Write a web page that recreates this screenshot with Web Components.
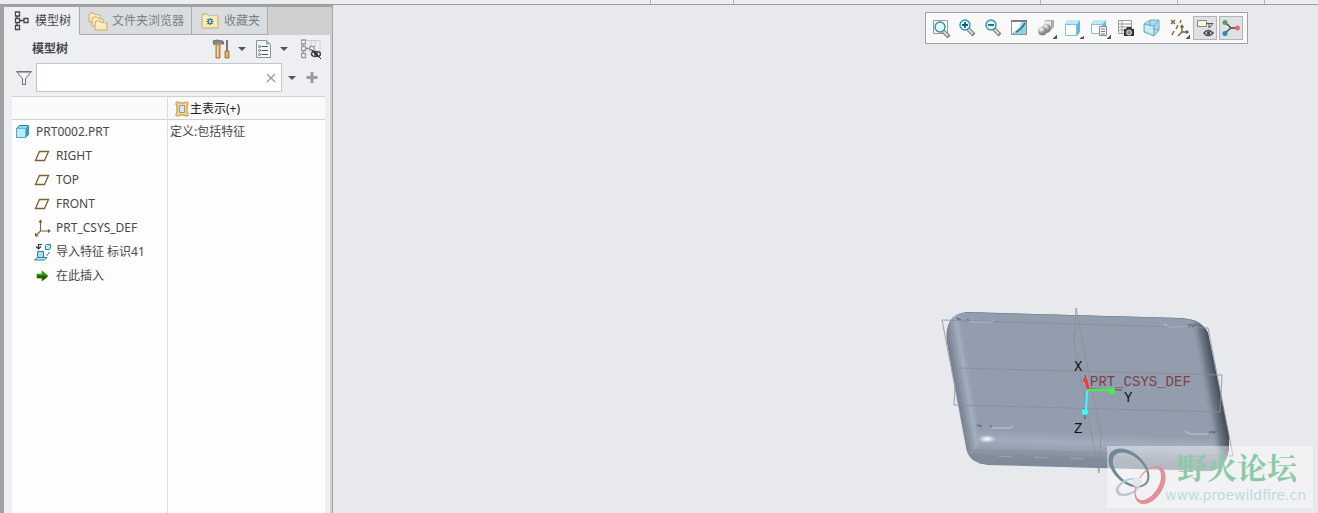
<!DOCTYPE html>
<html lang="zh-CN">
<head>
<meta charset="utf-8">
<title>模型树</title>
<style>
  :root {
    --line: #a2a2a2;
    --panel: #edeff2;
    --text: #484848;
  }
  html, body { height: 100%; }
  body {
    margin: 0;
    overflow: hidden;
    background: #e8e9ed;
    color: var(--text);
    font: 12px/16px "Noto Sans", "Noto Sans CJK SC", sans-serif;
  }
</style>
</head>
<body>
<cad-app>
  <side-panel slot="side">
    <panel-tabs slot="tabs"></panel-tabs>
    <tree-tools></tree-tools>
    <tree-filter></tree-filter>
    <model-tree></model-tree>
  </side-panel>
  <view-toolbar></view-toolbar>
  <part-view></part-view>
</cad-app>

<script>
const cube = (x, y, s, d) => `
  <path d="M${x} ${y + d}l${d}-${d}h${s}v${s}l-${d} ${d}h-${s}z" fill="#8ed6ee" stroke="#2c7da0"/>
  <path d="M${x + s} ${y + d}l${d}-${d}v${s}l-${d} ${d}z" fill="#389fc9"/>
  <path d="M${x} ${y + d}h${s}v${s}h-${s}z" fill="#b8ecfa" stroke="#4a9dbc" stroke-width=".6"/>`;

const lens = (mark) => `
  <path d="M11 11l6 6" stroke="#777" stroke-width="4"/>
  <path d="M11 11l5 5" stroke="#ddd" stroke-width="2"/>
  <circle cx="8" cy="7" r="5" fill="#e7f7fb" stroke="#3290b4" stroke-width="1.4"/>${mark}`;

const folder = (x, y, w, h) => `
  <path d="M${x} ${y + h}v-${h - 2}l1-2h4l2 2h${w - 7}v${h - 2}z" fill="#ffe9b8" stroke="#c49a54" stroke-width=".8"/>
  <path d="M${x + 1} ${y + 3}h${w - 2}" stroke="#fff7df"/>`;

const nodes = (c) => `
  <g fill="#fff" stroke="${c}" stroke-width="1.3"><path d="M5 5v9M5 9.500h6"/>
  <path d="M3.500 1h4v4h-4zM3.500 7.500h4v4h-4zM3.500 14.500h4v4h-4zM12 7.500h4v4h-4z"/><path d="M7.500 9.500H12"/></g>`;

// every glyph sits on a 20x20 grid
const icons = {
  nodes: nodes("#444"),
  folders: folder(1, 2, 11, 9) + folder(4, 6, 11, 9) + folder(7, 10, 12, 9),
  favorite: folder(2, 3, 16, 14) + `<path d="M10 7v7M6.500 10.500h7M7.500 8l5 5M12.500 8l-5 5" stroke="#116b88" stroke-width="1.200"/><circle cx="10" cy="10.500" r="1.200" fill="#fff"/>`,
  tools: `
    <path d="M2 2q3-2 10 0l1 3h-3l-1-1H5L3 6z" fill="#8a8d90" stroke="#55585b" stroke-width=".7"/>
    <path d="M5 5h4v14H5z" fill="#e2b566" stroke="#8c6325" stroke-width=".8"/><path d="M6.500 7v11" stroke="#ffe9b5"/>
    <path d="M16 1v11" stroke="#777" stroke-width="2"/><path d="M14 12h4v7h-4z" fill="#e2b566" stroke="#8c6325" stroke-width=".8"/>`,
  sheet: `
    <path d="M3.500 1.500h10l4 4v13h-14z" fill="#f0f7fb" stroke="#8b959b"/><path d="M13 1.500v4h4z" fill="#83b8b1"/>
    <path d="M8.500 7.500H15M8.500 11.500H15M8.500 15.500H15" stroke="#555"/>
    <g fill="#fff" stroke="#555" stroke-width=".8"><circle cx="6.500" cy="7.500" r="1"/><circle cx="6.500" cy="11.500" r="1"/><circle cx="6.500" cy="15.500" r="1"/></g>`,
  hidden: `<path d="M6 1.500h13v9M14 2v8M10 2v6" stroke="#ccc" fill="none"/><g transform="translate(-3)">${nodes("#999")}</g>
    <ellipse cx="15" cy="15" rx="4.500" ry="2.500" fill="#eee" stroke="#444" stroke-width="1.500"/><circle cx="15" cy="15" r="2" fill="#444"/><path d="M10.500 10.500l10 10" stroke="#111"/>`,
  funnel: `<path d="M2.500 3.500h15l-6 7v6h-3v-6z" fill="#f2f2f2" stroke="#707070"/><path d="M4 4.500h12" stroke="#aaa"/>`,
  clear: `<path d="M6 6l8 8M14 6l-8 8" stroke="#999" stroke-width="1.300"/>`,
  plus: `<path d="M10 4v11M4.500 9.500h11" stroke="#9b9b9b" stroke-width="3"/>`,
  rep: `<g transform="translate(2)"><path d="M5.500 4.500h9v11h-9z" fill="none" stroke="#f4d797" stroke-width="3"/><path d="M7.500 6.500h5v7h-5z" fill="#c9eefa" stroke="#a3803f" stroke-width=".8"/><path d="M4 3h3v1h6V3h3v3h-1v8h1v3h-3v-1H7v1H4v-3h1V6H4z" fill="none" stroke="#b58a42" stroke-width=".8"/></g>`,
  part: cube(4.5, 3.5, 9, 3),
  plane: `<path d="M3.500 14.500l4-9h9l-4 9z" fill="#fffdf7" stroke="#7b6230" stroke-width="1.300"/>`,
  csys: `<path d="M8.500 3v10H18M8.500 13l-5 5M7 4.500l1.500-2 1.500 2M16 11.500l2 1.500-2 1.500M3.500 15v3h3" fill="none" stroke="#7b6230" stroke-width="1.100"/>`,
  imported: `<path d="M2.500 18l3-2.500H15L12.500 18z" fill="#c3edf8" stroke="#2c7da0"/><path d="M5.500 9.500h6v6h-6z" fill="#9fe0f5" stroke="#2c7da0"/>
    <path d="M13.500 3.500l1-1h4v4l-1 1h-4z" fill="#b8ecfa" stroke="#2c7da0"/><path d="M17.500 10l-3 4" stroke="#2c7da0"/>
    <path d="M10 2.500H6.500V6M4 4.500l2.500 2.500L9 4.500" fill="none" stroke="#333" stroke-width="1.200"/>`,
  insert: `<path d="M5 8h5V5l6 5-6 5v-3H5z" fill="#16780a" stroke="#5c7a00" stroke-width=".7"/><path d="M6 8.500h5V6.500l3 3" fill="none" stroke="#23c410"/><path d="M6 11h9l-4 3v-2H6z" fill="#33400c"/>`,
  refit: `<path d="M2.500 2.500h14v13h-14z" fill="#fff" stroke="#999"/><g transform="translate(1 2)">${lens("")}</g>`,
  zoomIn: lens(`<path d="M8 4v6M5 7h6" stroke="#12607e" stroke-width="1.800"/>`),
  zoomOut: lens(`<path d="M5 7h6" stroke="#12607e" stroke-width="1.800"/>`),
  repaint: `<path d="M2.500 2.500h15v14h-15z" fill="#8fd0e2" stroke="#8a9498"/><path d="M3 4h10Q10 12 3 15z" fill="#fff"/><path d="M7 14q6-3 9-9" fill="none" stroke="#236b7d" stroke-width="1.500"/><path d="M2 3h16" stroke="#687478" stroke-width="1.500"/>`,
  shade: `
    <defs><radialGradient id="ball" cx=".35" cy=".3"><stop offset="0" stop-color="#fff"/><stop offset=".6" stop-color="#bbb"/><stop offset="1" stop-color="#888"/></radialGradient></defs>
    <path d="M8 3l2-1h8v7l-3 3H8z" fill="#aaa"/><path d="M8 3h7v8H8z" fill="#e4e4e4"/>
    <circle cx="10.500" cy="10.500" r="4.500" fill="url(#ball)"/><circle cx="6.500" cy="13" r="4.500" fill="url(#ball)"/>`,
  saved: `<path d="M2 6l3-4h12v12l-3 4z" fill="#5fb9dc"/><path d="M2 6h12l3-4H5z" fill="#bceafa"/><path d="M2.500 6.500h11v11h-11z" fill="#fff" stroke="#86bfd4"/>`,
  views: `<path d="M1 6l3-4h12v10l-3 4z" fill="#5fb9dc"/><path d="M1 6h12l3-4H4z" fill="#bceafa"/><path d="M1.500 6.500h11v9h-11z" fill="#fff" stroke="#86bfd4"/><path d="M9.500 8.500h7v9h-7z" fill="#f7f7f7" stroke="#888"/><path d="M11 11h4M11 13.500h4M11 16h4" stroke="#777"/>`,
  manager: `<path d="M2.500 2.500h13v13h-13zM2.500 6h13M2.500 9h13M2.500 12h13M6 2.500v13" fill="#fff" stroke="#999"/><path d="M8 11h2l1-2h4l1 2h2v7H8z" fill="#333"/><circle cx="13" cy="14.500" r="2.500" fill="#888" stroke="#fff" stroke-width=".8"/>`,
  perspective: `<path d="M2 6l6-4h9v10l-5 6-10-4z" fill="#a9dcea" stroke="#5899b1" stroke-width=".8"/><path d="M2 6l10 2 5-6M12 8v10M8 2v8l-6 4M8 10l9 2" fill="none" stroke="#6aa5bb" stroke-width=".8"/><path d="M3 7l8 2v7l-8-3z" fill="#e0f6fc" opacity=".7"/>`,
  datum: `<path d="M2 2l4 4M6 2L2 6M12 2l-1 3M9 7l-2 4M5 13l-2 4M13 8v6h6M13 14l-4 4M11.500 9.500l1.500-2 1.500 2M17 12.500l2 1.500-2 1.500" fill="none" stroke="#7b6230" stroke-width="1.400"/>`,
  notes: `<path d="M2.500 2.500h9v6h-9z" fill="#fff5dc" stroke="#888"/><path d="M11.500 5.500H18L15 9M14 5v5l2-2" fill="none" stroke="#555"/><path d="M9 15q4-5 9 0-5 5-9 0z" fill="#fff" stroke="#444" stroke-width="1.500"/><circle cx="13.500" cy="15" r="1.800" fill="#444"/>`,
  spin: `<path d="M4 4l6 6h7M10 10l-6 5" fill="none" stroke="#444" stroke-width="1.300"/><circle cx="4" cy="4.500" r="2.500" fill="#5b9f4e"/><circle cx="16.500" cy="10" r="2.500" fill="#e76e6e"/><circle cx="4" cy="15.500" r="2.500" fill="#3289b0"/>`
};

class CadIcon extends HTMLElement {
  connectedCallback() {
    this.attachShadow({ mode: "open" }).innerHTML = /* html */ `
    <style>
      :host { display: inline-flex; flex: none; width: 20px; height: 20px; }
      svg { display: block; width: 100%; height: 100%; }
    </style>
    <svg viewBox="0 0 20 20" aria-hidden="true">${icons[this.getAttribute("name")]}</svg>`;
  }
}

class CadApp extends HTMLElement {
  connectedCallback() {
    this.attachShadow({ mode: "open" }).innerHTML = /* html */ `
    <style>
      :host { display: flex; flex-direction: column; height: 100vh; }
      .ribbon {
        display: flex; justify-content: flex-end; flex: none; height: 4px;
        background: #ecedef; border-bottom: 1px solid #9c9c9c;
      }
      .ribbon i { box-sizing: border-box; border-left: 1px solid #b5b5b5; }
      .w1 { width: 83px; } .w2 { width: 307px; } .w3 { width: 137px; }
      .w4 { width: 87px; } .w5 { width: 54px; }
      .main { display: flex; flex: 1; min-height: 0; }
      .view { display: flex; flex-direction: column; align-items: flex-end; flex: 1; min-width: 0; }
    </style>
    <div class="ribbon"><i class="w1"></i><i class="w2"></i><i class="w3"></i><i class="w4"></i><i class="w5"></i></div>
    <div class="main">
      <slot name="side"></slot>
      <div class="view"><slot></slot></div>
    </div>`;
  }
}

class SidePanel extends HTMLElement {
  connectedCallback() {
    this.attachShadow({ mode: "open" }).innerHTML = /* html */ `
    <style>
      :host {
        display: flex; flex-direction: column; flex: none;
        box-sizing: border-box; width: 333px; background: var(--panel);
        border: solid var(--line); border-width: 2px 1px 0 4px;
      }
      .body {
        display: flex; flex-direction: column; flex: 1; min-height: 0;
        padding: 0 5px 0 8px; border-right: 2px solid #cfd0d2;
      }
    </style>
    <slot name="tabs"></slot>
    <div class="body"><slot></slot></div>`;
  }
}

class PanelTabs extends HTMLElement {
  connectedCallback() {
    this.attachShadow({ mode: "open" }).innerHTML = /* html */ `
    <style>
      :host { display: block; background: #cfd0d2; }
      nav { display: flex; height: 28px; }
      button {
        display: flex; align-items: center; gap: 4px; box-sizing: border-box;
        padding: 0 7px 0 8px; border: solid #a9abad; border-width: 0 1px 1px 0;
        background: #d9dddf; color: #7c8085; font: inherit;
      }
      button[aria-selected=true] { gap: 3px; padding-right: 8px; background: var(--panel); color: var(--text); border-bottom-color: var(--panel); }
    </style>
    <nav role="tablist">
      <button role="tab" aria-selected="true"><cad-icon name="nodes"></cad-icon>模型树</button>
      <button role="tab"><cad-icon name="folders"></cad-icon>文件夹浏览器</button>
      <button role="tab"><cad-icon name="favorite"></cad-icon>收藏夹</button>
    </nav>`;
  }
}

class TreeTools extends HTMLElement {
  connectedCallback() {
    this.attachShadow({ mode: "open" }).innerHTML = /* html */ `
    <style>
      :host { display: flex; align-items: center; height: 28px; padding-left: 20px; padding-right: 4px; }
      span { flex: 1; font-weight: 600; }
      button { display: flex; align-items: center; gap: 7px; margin-right: 7px; padding: 0; border: 0; background: none; }
      button:last-child { margin: 0 0 0 6px; }
      i { border: 4px solid transparent; border-top-color: #555; border-bottom: 0; }
    </style>
    <span>模型树</span>
    <button aria-label="设置"><cad-icon name="tools"></cad-icon><i></i></button>
    <button aria-label="显示"><cad-icon name="sheet"></cad-icon><i></i></button>
    <button aria-label="隐藏"><cad-icon name="hidden"></cad-icon></button>`;
  }
}

class TreeFilter extends HTMLElement {
  connectedCallback() {
    this.attachShadow({ mode: "open" }).innerHTML = /* html */ `
    <style>
      :host { display: flex; align-items: center; margin-bottom: 4px; padding: 0 3px 0 2px; }
      .box {
        display: flex; align-items: center; flex: 1; box-sizing: border-box; height: 29px;
        margin: 0 6px 0 2px; background: #fff; border: 1px solid #c3c5c7;
      }
      input { flex: 1; min-width: 0; border: 0; outline: 0; background: none; font: inherit; }
      button { display: flex; padding: 0; border: 0; background: none; }
      i { border: 4px solid transparent; border-top-color: #555; border-bottom: 0; }
      .add { margin-left: 6px; }
    </style>
    <cad-icon name="funnel"></cad-icon>
    <div class="box">
      <input type="text" aria-label="过滤">
      <button aria-label="清除"><cad-icon name="clear"></cad-icon></button>
    </div>
    <button aria-label="过滤选项"><i></i></button>
    <button class="add" aria-label="添加"><cad-icon name="plus"></cad-icon></button>`;
  }
}

class ModelTree extends HTMLElement {
  rows = [
    ["part", "PRT0002.PRT", "定义:包括特征"],
    ["plane", "RIGHT"],
    ["plane", "TOP"],
    ["plane", "FRONT"],
    ["csys", "PRT_CSYS_DEF"],
    ["imported", "导入特征 标识41"],
    ["insert", "在此插入"]
  ];

  row = ([icon, name, rep = ""]) => /* html */ `
    <tr>
      <td><div class="${icon === "part" ? "root" : "child"}"><cad-icon name="${icon}"></cad-icon>${name}</div></td>
      <td>${rep}</td>
    </tr>`;

  connectedCallback() {
    this.attachShadow({ mode: "open" }).innerHTML = /* html */ `
    <style>
      :host { display: flex; flex: 1; min-height: 0; background: #fdfdfd; border-top: 1px solid #d0d2d2; }
      table { width: 100%; height: 100%; border-spacing: 0; table-layout: fixed; }
      col:first-child { width: 156px; }
      th, td { box-sizing: border-box; height: 24px; padding: 0 2px; text-align: left; }
      th { height: 23px; padding-top: 2px; background: #fafafa; border-bottom: 1px solid #d0d2d2; color: #222; font-weight: 400; }
      th:first-child, td:first-child { padding: 0; border-right: 1px solid #dcdddf; }
      td div { display: flex; align-items: center; gap: 4px; }
      th div { display: flex; align-items: center; }
      .child { padding-left: 20px; }
      .fill td { height: auto; }
    </style>
    <table>
      <colgroup><col><col></colgroup>
      <thead><tr><th></th><th><div><cad-icon name="rep"></cad-icon>主表示(+)</div></th></tr></thead>
      <tbody>${this.rows.map(this.row).join("")}<tr class="fill"><td></td><td></td></tr></tbody>
    </table>`;
  }
}

class ViewToolbar extends HTMLElement {
  buttons = [
    ["refit", "重新调整"], ["zoomIn", "放大"], ["zoomOut", "缩小"], ["repaint", "重画"],
    ["shade", "显示样式", "more"], ["saved", "已保存方向", "more"], ["views", "视图", "more"],
    ["manager", "视图管理器"], ["perspective", "透视图"], ["datum", "基准显示", "more"],
    ["notes", "注释显示", "on"], ["spin", "旋转中心", "on"]
  ];

  connectedCallback() {
    this.attachShadow({ mode: "open" }).innerHTML = /* html */ `
    <style>
      :host {
        display: flex; gap: 2px; flex: none; margin: 7px 70px 0 0; padding: 3px 4px 3px 3px;
        background: #f9f9f9; border: 1px solid #a0a0a0;
      }
      button {
        display: flex; align-items: center; justify-content: center; box-sizing: border-box;
        width: 24px; height: 24px; padding: 0; border: 1px solid transparent; background: none;
      }
      .more { width: 25px; background: linear-gradient(135deg, transparent 50%, #555 50%) right bottom / 4px 4px no-repeat; }
      .on { background: #dfe1e5; border-color: #b2b4b7; }
    </style>
    ${this.buttons.map(([icon, label, kind = ""]) => `<button class="${kind}" aria-label="${label}"><cad-icon name="${icon}"></cad-icon></button>`).join("")}`;
  }
}

class PartView extends HTMLElement {
  connectedCallback() {
    this.attachShadow({ mode: "open" }).innerHTML = /* html */ `
    <style>
      :host { display: block; margin-top: auto; }
      svg { display: block; width: 388px; height: 213px; }
      .cad { font-family: "Liberation Mono", monospace; font-size: 14px; }
      .wire { fill: none; stroke: #8d8e97; stroke-width: .8; }
    </style>
    <svg viewBox="0 0 388 213" role="img" aria-label="PRT0002">
      <defs>
        <linearGradient id="face" x1="0" y1="12" x2="-5" y2="171" gradientUnits="userSpaceOnUse">
          <stop offset="0" stop-color="#929dad"/><stop offset=".73" stop-color="#929dad"/>
          <stop offset=".79" stop-color="#a1adbd"/><stop offset=".83" stop-color="#98a4b3"/>
          <stop offset=".89" stop-color="#818d9b"/><stop offset=".96" stop-color="#7d8997"/><stop offset="1" stop-color="#5a6470"/>
        </linearGradient>
        <linearGradient id="left" x1="24" y1="75" x2="42" y2="72" gradientUnits="userSpaceOnUse">
          <stop offset="0" stop-color="#768290"/><stop offset=".25" stop-color="#8995a4"/>
          <stop offset=".6" stop-color="#a3afbf"/><stop offset="1" stop-color="#929dad" stop-opacity="0"/>
        </linearGradient>
        <linearGradient id="right" x1="288" y1="86" x2="272" y2="89" gradientUnits="userSpaceOnUse">
          <stop offset="0" stop-color="#46505b"/><stop offset=".5" stop-color="#707b88"/><stop offset="1" stop-color="#929dad" stop-opacity="0"/>
        </linearGradient>
        <radialGradient id="glint"><stop offset="0" stop-color="#fff"/><stop offset="1" stop-color="#fff" stop-opacity="0"/></radialGradient>
        <clipPath id="body"><path d="M35 12L250 18Q272 19 278 33L299 135V149Q295 171 278 171L58 165Q40 163 37 151L17 42Q14 15 35 12z"/></clipPath>
      </defs>
      <g clip-path="url(#body)">
        <path d="M0 0h388v213H0z" fill="url(#face)"/>
        <path d="M10 10h50L65 133Q48 136 46 150L30 155z" fill="url(#left)"/>
        <path d="M388 10H250L270 180H388z" fill="url(#right)"/>
        <path d="M35 12l215 6q20 1 27 10" fill="none" stroke="#66717e"/>
        <ellipse cx="57" cy="139" rx="9" ry="4" fill="url(#glint)"/>
        <path d="M68 156l14 1M104 157l14 1M140 158l14 1" stroke="#9ba6b3"/>
      </g>
      <g fill="none" stroke-width="2">
        <path d="M38 20l5 2h18l2-2M58 125l5 3h17l3-2M234 24l5 3h18M255 131l5 3h18" stroke="#aab4c1"/>
        <path d="M26 18l5 2M37 19l3 2M47 125l5 1M59 125l3 2M258 25h5M266 24l-4 3M279 132h5M287 131l-4 2" stroke="#66717e" stroke-width="1.500"/>
      </g>
      <path class="wire" d="M12 20L278 28 303 156 37 150zM26 68L292 75 290 112 24 105zM146 8L144 43 169 173 171 135z"/>
      <text class="cad" x="160" y="86" fill="#813f4a">PRT_CSYS_DEF</text>
      <path d="M155 75l3 14 34 1M155 108v11" fill="none" stroke="#813f4a"/>
      <path d="M156 80l2 9" stroke="#f33" stroke-width="3"/><circle cx="155" cy="80" r="2" fill="#f33"/>
      <path d="M157 90h25" stroke="#3f3" stroke-width="2"/><circle cx="182" cy="91" r="3" fill="#3f3"/>
      <path d="M157 91l-1 20" stroke="#3ff" stroke-width="2"/><circle cx="155" cy="112" r="3" fill="#3ff"/>
      <g class="cad" fill="#111">
        <text x="144" y="71">X</text><text x="194" y="102">Y</text><text x="144" y="133">Z</text>
      </g>
      <path d="M177 146h206v62H177z" fill="#fff" opacity=".42"/>
      <g fill-rule="evenodd">
        <path transform="translate(199 168) rotate(42)" d="M-24 0a24 15 0 1 0 48 0a24 15 0 1 0-48 0zM-19 0a20 12 0 1 0 41 0a20 12 0 1 0-41 0z" fill="#71879a"/>
        <path transform="translate(198 187) rotate(-25)" d="M-13 0a13 8 0 1 0 26 0a13 8 0 1 0-26 0zM-10 0a11 6 0 1 0 22 0a11 6 0 1 0-22 0z" fill="#bdc7d1"/>
        <path transform="translate(220 185) rotate(-58)" d="M-21 0a21 13 0 1 0 42 0a21 13 0 1 0-42 0zM-18 -2a18 10 0 1 0 36 0a18 10 0 1 0-36 0z" fill="#df9297"/>
        <circle cx="207" cy="182" r="5" fill="#e4e7ea"/>
      </g>
      <text x="247" y="179" font-family="'Noto Serif CJK SC', 'Noto Sans CJK SC', sans-serif" font-size="30" font-weight="700" fill="#8ccaa7">野火论坛</text>
      <text x="235" y="200" font-family="'DejaVu Sans', sans-serif" font-size="14" fill="#bddcdc">www.proewildfire.cn</text>
    </svg>`;
  }
}

customElements.define("cad-icon", CadIcon);
customElements.define("cad-app", CadApp);
customElements.define("side-panel", SidePanel);
customElements.define("panel-tabs", PanelTabs);
customElements.define("tree-tools", TreeTools);
customElements.define("tree-filter", TreeFilter);
customElements.define("model-tree", ModelTree);
customElements.define("view-toolbar", ViewToolbar);
customElements.define("part-view", PartView);
</script>
</body>
</html>
